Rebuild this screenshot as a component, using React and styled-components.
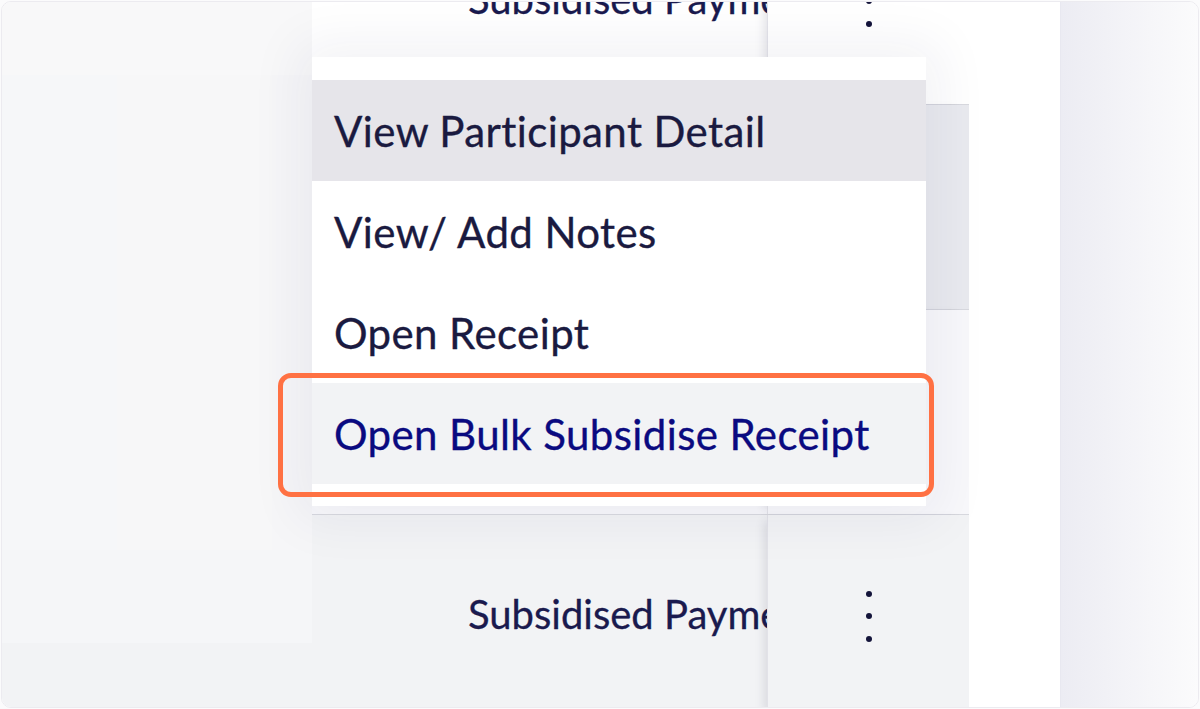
import React from "react";
import styled, { createGlobalStyle } from "styled-components";

const GlobalStyle = createGlobalStyle`
  html, body {
    margin: 0;
    padding: 0;
    background: #fbfbfc;
  }
  body {
    font-family: Lato, "Open Sans", sans-serif;
  }
`;

const Frame = styled.div`
  position: relative;
  width: 1196px;
  height: 705px;
  margin: 1px;
  border: 1px solid #ecebf0;
  border-radius: 10px;
  overflow: hidden;
  display: flex;
  background: #fff;
`;

const LeftPane = styled.div`
  width: 310px;
  flex-shrink: 0;
  display: grid;
  grid-template-columns: 115px 155px 40px;
  grid-template-rows: 73px 475px 93px 1fr;
`;

const Tile = styled.div`
  background: ${({ $bg }) => $bg || "#f6f7f9"};
  grid-column: ${({ $span }) => $span || "auto"};
`;

const Table = styled.div`
  width: 657px;
  flex-shrink: 0;
  display: flex;
  flex-direction: column;
  margin-top: -102px;
`;

const Row = styled.div`
  display: grid;
  grid-template-columns: 455px 202px;
  height: 204px;
  flex-shrink: 0;
  border-bottom: 1px solid #d8d9df;
  background: ${({ $bg }) => $bg || "#fff"};
`;

const TextCell = styled.div`
  display: flex;
  align-items: center;
  padding: 0 0 6px 156px;
  overflow: hidden;
  white-space: nowrap;
  font-size: 40px;
  color: #1a1a4e;
  -webkit-text-stroke: 0.3px currentColor;
`;

const ActionCell = styled.div`
  display: flex;
  align-items: center;
  justify-content: center;
  border-left: 1px solid #e2e2e8;
  box-shadow: -8px 0 10px -6px rgba(40, 40, 70, 0.14);
`;

const WhiteGap = styled.div`
  width: 91px;
  flex-shrink: 0;
  background: #fff;
`;

const SidePanel = styled.div`
  flex: 1;
  border-left: 1px solid #e8e8f0;
  background: linear-gradient(to right, #ececf3, #f6f6f9 65%, #fbfbfc);
`;

const Menu = styled.div`
  position: absolute;
  left: 310px;
  top: 55px;
  width: 614px;
  padding: 23px 0 22px;
  background: #fff;
  box-shadow: 0 0 50px 14px rgba(40, 40, 90, 0.06);
  display: flex;
  flex-direction: column;
`;

const MenuItem = styled.div`
  height: 101px;
  display: flex;
  align-items: center;
  padding-left: 22px;
  font-size: 42px;
  letter-spacing: 0.4px;
  white-space: nowrap;
  -webkit-text-stroke: 0.35px currentColor;
  color: ${({ $accent }) => ($accent ? "#0a0a80" : "#1a1a40")};
  background: ${({ $bg }) => $bg || "#fff"};
`;

const Highlight = styled.div`
  position: absolute;
  left: 276px;
  top: 371px;
  width: 656px;
  height: 124px;
  box-sizing: border-box;
  border: 5px solid #ff7143;
  border-radius: 13px;
  pointer-events: none;
`;

const Kebab = () => (
  <svg width="10" height="56" viewBox="0 0 10 56">
    <circle cx="5" cy="5" r="3" fill="#14143a" />
    <circle cx="5" cy="27" r="3" fill="#14143a" />
    <circle cx="5" cy="50" r="3" fill="#14143a" />
  </svg>
);

const rows = [
  { bg: "#fff", label: "Subsidised Payment" },
  { bg: "#e9eaef", label: "Subsidised Payment" },
  { bg: "#f8f8fb", label: "Subsidised Payment" },
  { bg: "#f2f3f5", label: "Subsidised Payment" },
];

const items = [
  { label: "View Participant Detail", bg: "#e6e5ea" },
  { label: "View/ Add Notes" },
  { label: "Open Receipt" },
  { label: "Open Bulk Subsidise Receipt", bg: "#f2f3f5", accent: true },
];

export default function App() {
  return (
    <>
      <GlobalStyle />
      <Frame>
        <LeftPane>
          <Tile $bg="#f8f8f9" />
          <Tile $bg="#f8f8f9" />
          <Tile $bg="#f8f8f9" />
          <Tile $bg="#f6f7f9" />
          <Tile $bg="#f7f7f8" />
          <Tile $bg="#f6f6f8" />
          <Tile $bg="#f5f6f8" $span="1 / 4" />
          <Tile $bg="#f2f3f5" $span="1 / 4" />
        </LeftPane>
        <Table>
          {rows.map((r, i) => (
            <Row key={i} $bg={r.bg}>
              <TextCell>{r.label}</TextCell>
              <ActionCell>
                <Kebab />
              </ActionCell>
            </Row>
          ))}
        </Table>
        <WhiteGap />
        <SidePanel />
        <Menu>
          {items.map((it) => (
            <MenuItem key={it.label} $bg={it.bg} $accent={it.accent}>
              {it.label}
            </MenuItem>
          ))}
        </Menu>
        <Highlight />
      </Frame>
    </>
  );
}
